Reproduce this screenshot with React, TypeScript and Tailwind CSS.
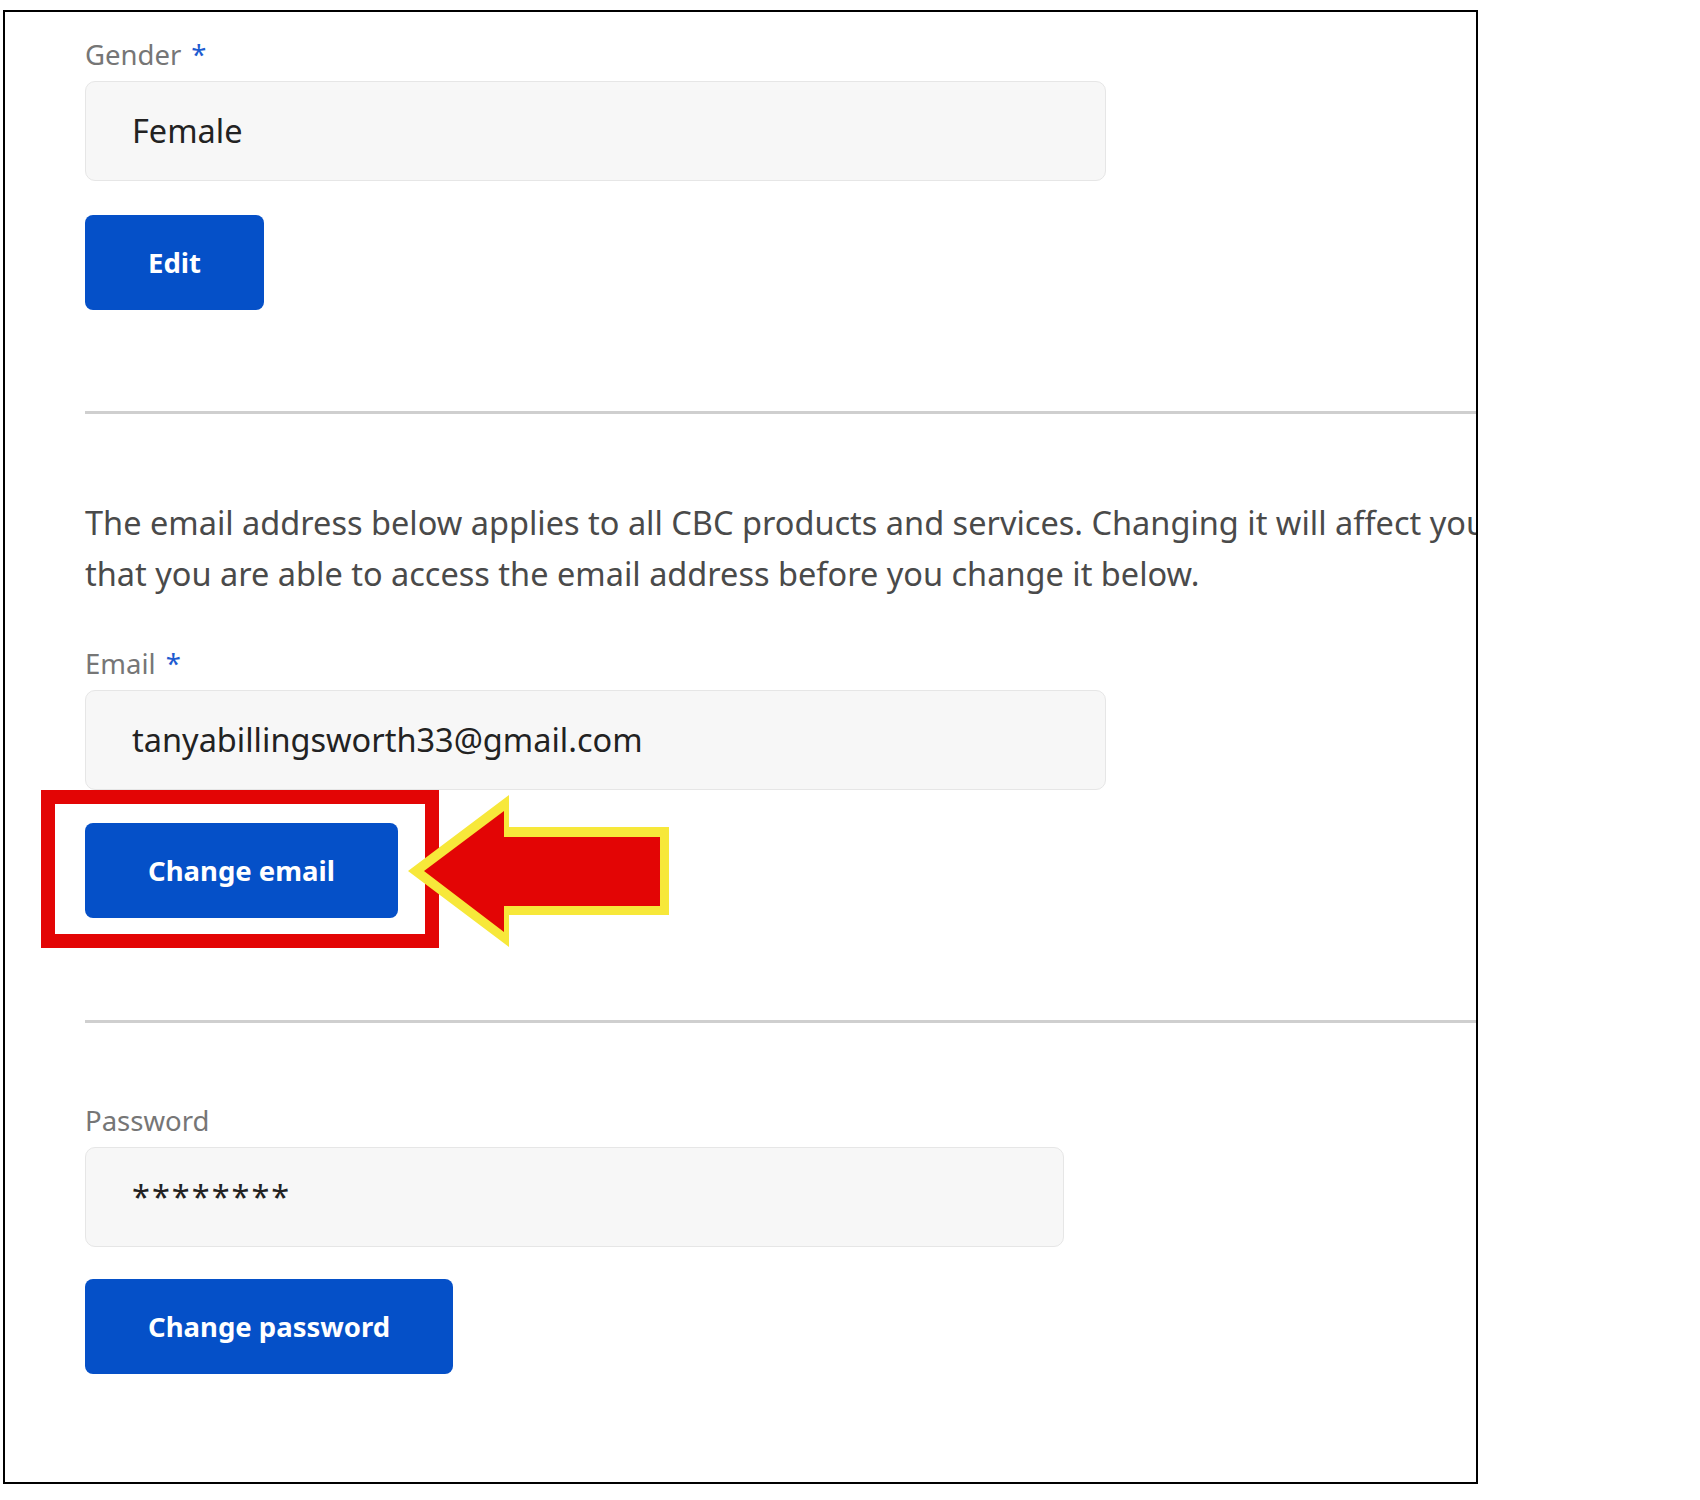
import React from "react";

const font = { fontFamily: '"Noto Sans", "Open Sans", Arial, sans-serif' };

type FieldProps = {
  label: string;
  value: string;
  required?: boolean;
  wide?: boolean;
  mask?: boolean;
};

const Field = ({ label, value, required, wide = true, mask }: FieldProps) => (
  <div className="flex flex-col">
    <label className="pt-[2px] text-[27.5px] leading-[36px] text-[#767676]">
      {label}
      {required && <span className="ml-[10px] text-[#1d5bd0]">*</span>}
    </label>
    <div
      className={`mt-[8px] flex h-[100px] items-center rounded-[10px] border border-[#e6e6e6] bg-[#f7f7f7] pl-[46px] ${
        wide ? "w-[1021px]" : "w-[979px]"
      }`}
    >
      <span
        className={`text-[32.5px] leading-[40px] text-[#222222] ${mask ? "tracking-[2px]" : ""}`}
      >
        {value}
      </span>
    </div>
  </div>
);

const PrimaryButton = ({ children }: { children: React.ReactNode }) => (
  <button className="flex h-[95px] items-center rounded-[8px] bg-[#0550c8] px-[63px] text-[27.5px] font-bold leading-[36px] text-white">
    {children}
  </button>
);

const Divider = () => <div className="h-[3px] w-full bg-[#cfcfcf]" />;

const Arrow = () => (
  <svg
    width="261"
    height="152"
    viewBox="0 0 261 152"
    className="absolute left-[323px] top-[-28px]"
  >
    <polygon points="0,76 101,0 101,32 261,32 261,120 101,120 101,152" fill="#f7e83a" />
    <polygon points="16,76 96,16 96,42 252,42 252,111 96,111 96,137" fill="#e30505" />
  </svg>
);

export default function App() {
  return (
    <div className="min-h-[1500px] w-[1700px] bg-white" style={font}>
      <div className="ml-[3px] pt-[10px]">
        <div className="relative h-[1474px] w-[1475px] overflow-hidden border-2 border-black bg-white pl-[80px] pt-[23px]">
          <Field label="Gender" value="Female" required />
          <div className="mt-[34px]">
            <PrimaryButton>Edit</PrimaryButton>
          </div>

          <div className="mt-[101px]">
            <Divider />
          </div>

          {/* first line runs past the frame edge, as in the screenshot */}
          <p className="mt-[83px] whitespace-nowrap text-[32.5px] leading-[51px] text-[#4a4a4a]">
            The email address below applies to all CBC products and services. Changing it will affect your
            <br />
            that you are able to access the email address before you change it below.
          </p>

          <div className="mt-[45px]">
            <Field label="Email" value="tanyabillingsworth33@gmail.com" required />
          </div>
          <div className="relative mt-[33px] w-fit">
            <PrimaryButton>Change email</PrimaryButton>
            <div className="absolute left-[-44px] top-[-33px] h-[158px] w-[398px] border-[14px] border-[#e30505]" />
            <Arrow />
          </div>

          <div className="mt-[102px]">
            <Divider />
          </div>

          <div className="mt-[78px]">
            <Field label="Password" value="********" wide={false} mask />
          </div>
          <div className="mt-[32px]">
            <PrimaryButton>Change password</PrimaryButton>
          </div>
        </div>
      </div>
    </div>
  );
}
